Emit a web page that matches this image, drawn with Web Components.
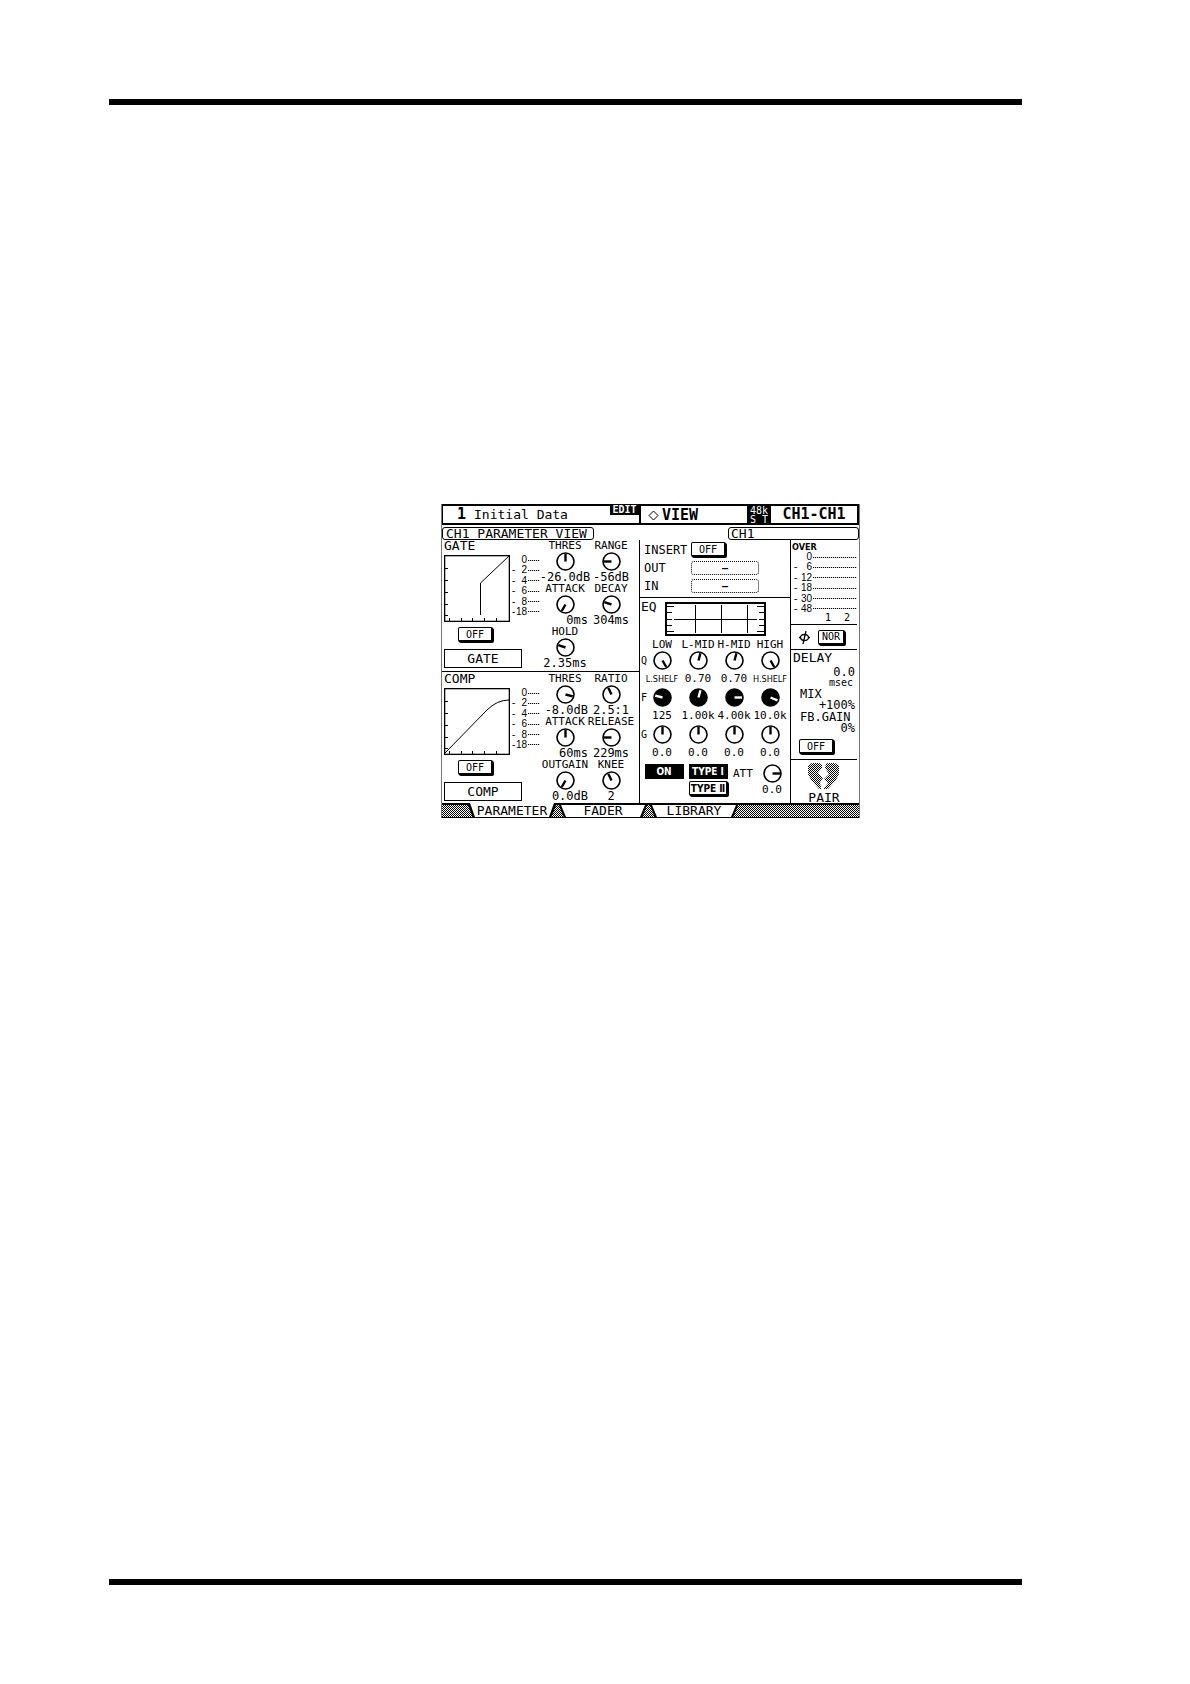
<!DOCTYPE html>
<html lang="en">
<head>
<meta charset="utf-8">
<title>CH1 Parameter View</title>
<style>
  body {
    margin: 0;
    background: #fff;
    color: #000;
    font: 11px/12px "DejaVu Sans Mono", "Liberation Mono", monospace;
  }
</style>
</head>
<body>
<manual-page>
  <lcd-screen></lcd-screen>
</manual-page>

<script>
const checker = 'repeating-conic-gradient(#000 0 25%, #fff 0 50%) 0 0 / 2px 2px';

// Printed page: a heavy rule above and below the content
customElements.define('manual-page', class extends HTMLElement {
  constructor() {
    super();
    this.attachShadow({ mode: 'open' }).innerHTML = `<style>
  :host {
    display: flex;
    flex-direction: column;
    min-height: 100vh;
    box-sizing: border-box;
    padding: 99px 168px 99px 109px;
  }

  hr {
    width: 100%;
    height: 6px;
    margin: 0;
    border: none;
    background: #000;
  }

  main {
    flex: 1;
    padding: 399px 0 0 332px;
  }
</style>
<hr>
<main><slot></slot></main>
<hr>`;
  }
});

// Raised button, "on" inverts it
customElements.define('lcd-button', class extends HTMLElement {
  constructor() {
    super();
    this.attachShadow({ mode: 'open' }).innerHTML = `<style>
  :host {
    display: block;
    width: 35px;
    height: 15px;
    font-size: 10px;
  }

  button {
    display: block;
    width: 100%;
    height: 100%;
    padding: 0;
    border: 1px solid #000;
    border-width: 1px 2px 2px 1px;
    border-radius: 2px;
    background: #fff;
    color: #000;
    font: inherit;
    line-height: 11px;
    white-space: nowrap;
    box-shadow: 1px 1px 0 #000;
  }

  :host([on]) button {
    background: #000;
    color: #fff;
    border-radius: 0;
    box-shadow: none;
  }

  :host([dotted]) button {
    border: 1px dotted #000;
    border-radius: 3px;
    font-weight: bold;
    box-shadow: none;
  }
</style>
<button type="button"><slot></slot></button>`;
  }
});

// Rotary knob: angle is in degrees from twelve o'clock
customElements.define('lcd-knob', class extends HTMLElement {
  constructor() {
    super();
    const angle = this.getAttribute('angle') || 0;
    const label = this.getAttribute('label');
    const name = this.getAttribute('name') || label;
    const filled = this.hasAttribute('filled');

    this.attachShadow({ mode: 'open' }).innerHTML = `<style>
  :host {
    display: flex;
    flex-direction: column;
    align-items: center;
    white-space: nowrap;
    min-width: 0;
  }

  label, output {
    display: flex;
    justify-content: center;
    width: 100%;
    height: 12px;
  }

  output {
    margin-top: var(--value-gap, 0);
    font-size: var(--value-size, 12px);
  }

  :host([narrow]) output {
    font: 9px/12px "Liberation Sans Narrow", "DejaVu Sans Condensed", sans-serif;
  }

  :host([end]) output {
    justify-content: flex-end;
  }

  .dial {
    position: relative;
    height: 19px;
  }

  svg {
    display: block;
  }

  input {
    position: absolute;
    inset: 0;
    width: 19px;
    height: 19px;
    margin: 0;
    opacity: 0;
  }
</style>
${label ? `<label for="range">${label}</label>` : ''}
<div class="dial">
  <svg width="19" height="19" viewBox="0 0 19 19">
    <circle cx="9.5" cy="9.5" r="8.5" fill="${filled ? '#000' : '#fff'}" stroke="#000" stroke-width="1.6"/>
    <path d="M9.5 9.5V2" transform="rotate(${angle} 9.5 9.5)" stroke="${filled ? '#fff' : '#000'}" stroke-width="2.4"/>
  </svg>
  <input id="range" type="range" min="-150" max="150" value="${angle}" aria-label="${name}">
</div>
<output for="range"><slot></slot></output>`;
  }
});

// Meter scale, one row per level with a dotted line to the right
customElements.define('lcd-scale', class extends HTMLElement {
  constructor() {
    super();
    const rows = this.getAttribute('levels').split(',').map((level) => `
<li><span class="level"><i>${level === '0' ? '' : '-'}</i><b>${level}</b></span><span class="dots"></span></li>`);

    this.attachShadow({ mode: 'open' }).innerHTML = `<style>
  :host {
    display: block;
    font: 10px/10px "Liberation Sans", sans-serif;
  }

  ul {
    display: flex;
    flex-direction: column;
    justify-content: space-between;
    height: 62px;
    margin: 0;
    padding: 0;
    list-style: none;
  }

  li {
    display: flex;
    align-items: center;
    gap: 1px;
    height: 10px;
  }

  .level {
    display: flex;
    justify-content: space-between;
    width: var(--level-width, 15px);
  }

  i, b {
    font-style: normal;
    font-weight: normal;
  }

  .dots {
    flex: 1;
    height: 1px;
    background: repeating-linear-gradient(90deg, #000 0 1px, #ccc 1px 2px);
  }
</style>
<ul>${rows.join('')}</ul>`;
  }
});

// Gate / comp block: graph on the left, knobs on the right
customElements.define('dynamics-panel', class extends HTMLElement {
  constructor() {
    super();
    const name = this.getAttribute('name');
    this.attachShadow({ mode: 'open' }).innerHTML = `<style>
  :host {
    display: grid;
    grid-template-columns: 96px 92px;
    gap: 2px;
    padding-left: 2px;
  }

  h2 {
    margin: 0 0 3px;
    font-size: 13px;
    font-weight: normal;
    line-height: 12px;
  }

  .curve {
    display: grid;
    grid-template-columns: 66px 1fr;
    gap: 2px;
    margin-bottom: 5px;
  }

  svg {
    display: block;
  }

  lcd-button {
    margin: 0 0 7px 14px;
  }

  .library {
    width: 78px;
    height: 19px;
    box-sizing: border-box;
    border: 1px solid #000;
    font-size: 13px;
    line-height: 17px;
    text-align: center;
  }

  .knobs {
    display: grid;
    grid-template-columns: 46px 46px;
    align-content: start;
  }
</style>
<div>
  <h2>${name}</h2>
  <div class="curve">
    <svg width="66" height="67" viewBox="0 0 66 67" fill="none" stroke="#000">
      <rect x=".5" y=".5" width="65" height="66" stroke-width="1.6"/>
      <path d="M0 13.5h4M0 25.5h4M0 37.5h4M0 49.5h4M0 60.5h4M5.5 67v-4M17.5 67v-4M28.5 67v-4M40.5 67v-4M52.5 67v-4"/>
      <path d="${this.getAttribute('curve')}"/>
    </svg>
    <lcd-scale levels="0,2,4,6,8,18"></lcd-scale>
  </div>
  <lcd-button>OFF</lcd-button>
  <div class="library">${name}</div>
</div>
<div class="knobs"><slot></slot></div>`;
  }
});

customElements.define('insert-panel', class extends HTMLElement {
  constructor() {
    super();
    this.attachShadow({ mode: 'open' }).innerHTML = `<style>
  :host {
    display: grid;
    grid-template-columns: 47px 68px;
    grid-template-rows: 15px 14px 14px;
    gap: 4px 0;
    align-items: center;
    padding: 2px 0 0 4px;
    font-size: 12px;
  }

  lcd-button[dotted] {
    width: 68px;
    height: 14px;
  }
</style>
<span>INSERT</span><lcd-button>OFF</lcd-button>
<span>OUT</span><lcd-button dotted>–</lcd-button>
<span>IN</span><lcd-button dotted>–</lcd-button>`;
  }
});

customElements.define('eq-panel', class extends HTMLElement {
  constructor() {
    super();
    this.attachShadow({ mode: 'open' }).innerHTML = `<style>
  :host {
    display: block;
    padding: 4px 0 0 1px;
    --value-size: 11px;
  }

  header {
    display: flex;
    gap: 8px;
    height: 37px;
  }

  h2 {
    width: 16px;
    margin: 0;
    font-size: 13px;
    font-weight: normal;
    line-height: 9px;
  }

  .bands {
    display: grid;
    grid-template-columns: 3px repeat(4, 36px);
    row-gap: 3px;
    --value-gap: 3px;
  }

  .bands > span {
    align-self: start;
    padding-top: 4px;
    font-size: 10px;
  }

  .bands > .first {
    padding-top: 16px;
  }

  footer {
    display: grid;
    grid-template-columns: 39px 39px 24px 1fr;
    gap: 5px;
    align-items: start;
    padding: 5px 0 0 4px;
    --value-gap: 1px;
  }

  lcd-button {
    width: 39px;
    font: bold 10px/11px "Liberation Sans Narrow", "DejaVu Sans Condensed", sans-serif;
  }

  .types {
    display: grid;
    gap: 2px;
  }

  .att {
    padding-top: 4px;
  }

  footer lcd-knob {
    width: 36px;
    margin-left: -8px;
  }
</style>
<header>
  <h2>EQ</h2>
  <svg width="101" height="35" viewBox="0 0 101 35" fill="none" stroke="#000">
    <rect x="1" y="1" width="99" height="32" stroke-width="2"/>
    <path d="M30.5 3v28M56.5 3v28M82.5 3v28M9 17.5h83"/>
    <path d="M2 4.5h7M2 10.5h5M2 17.5h5M2 23.5h5M2 29.5h7M92 4.5h7M94 10.5h5M94 17.5h5M94 23.5h5M92 29.5h7"/>
  </svg>
</header>
<div class="bands">
  <span class="first">Q</span>
  <lcd-knob label="LOW" angle="150" narrow>L.SHELF</lcd-knob>
  <lcd-knob label="L-MID" angle="15">0.70</lcd-knob>
  <lcd-knob label="H-MID" angle="15">0.70</lcd-knob>
  <lcd-knob label="HIGH" angle="150" narrow>H.SHELF</lcd-knob>
  <span>F</span>
  <lcd-knob name="Low frequency" angle="-75" filled>125</lcd-knob>
  <lcd-knob name="Low mid frequency" angle="15" filled>1.00k</lcd-knob>
  <lcd-knob name="High mid frequency" angle="90" filled>4.00k</lcd-knob>
  <lcd-knob name="High frequency" angle="112" filled>10.0k</lcd-knob>
  <span>G</span>
  <lcd-knob name="Low gain">0.0</lcd-knob>
  <lcd-knob name="Low mid gain">0.0</lcd-knob>
  <lcd-knob name="High mid gain">0.0</lcd-knob>
  <lcd-knob name="High gain">0.0</lcd-knob>
</div>
<footer>
  <lcd-button on>ON</lcd-button>
  <div class="types">
    <lcd-button on>TYPE Ⅰ</lcd-button>
    <lcd-button>TYPE Ⅱ</lcd-button>
  </div>
  <span class="att">ATT</span>
  <lcd-knob name="Attenuation" angle="90">0.0</lcd-knob>
</footer>`;
  }
});

// Right hand strip: meter, phase, delay and pair
customElements.define('channel-strip', class extends HTMLElement {
  constructor() {
    super();
    this.attachShadow({ mode: 'open' }).innerHTML = `<style>
  :host {
    display: grid;
    grid-template-rows: 84px 25px 110px 1fr;
    padding-right: 2px;
    font-size: 12px;
    line-height: 11px;
  }

  section + section {
    border-top: 1px solid #000;
  }

  .over {
    display: block;
    padding: 3px 0 0 1px;
    font: bold 9px/9px "Liberation Sans Narrow", "DejaVu Sans Condensed", sans-serif;
  }

  lcd-scale {
    --level-width: 18px;
    padding-left: 3px;
  }

  .channels {
    display: flex;
    justify-content: flex-end;
    gap: 13px;
    padding-right: 7px;
    font-size: 10px;
    line-height: 8px;
  }

  .phase {
    display: flex;
    align-items: center;
    gap: 8px;
    padding-left: 8px;
  }

  .phase lcd-button {
    width: 27px;
  }

  .delay {
    display: grid;
    align-content: start;
    padding: 2px 2px 0 2px;
  }

  .delay span {
    margin-top: 1px;
    padding-left: 7px;
  }

  .delay output {
    text-align: right;
  }

  .delay .title {
    margin: 0;
    padding: 0 0 4px;
    font-size: 13px;
  }

  .delay .unit {
    padding-right: 2px;
    font-size: 10px;
    line-height: 10px;
  }

  .delay lcd-button {
    margin: 5px 0 0 6px;
  }

  .pair {
    display: grid;
    justify-items: center;
    align-content: start;
    gap: 2px;
    padding-top: 2px;
    font-size: 13px;
  }
</style>
<section>
  <span class="over">OVER</span>
  <lcd-scale levels="0,6,12,18,30,48"></lcd-scale>
  <div class="channels"><span>1</span><span>2</span></div>
</section>
<section class="phase">
  <svg width="11" height="13" viewBox="0 0 11 13" fill="none" stroke="#000" stroke-width="1.3">
    <ellipse cx="5.5" cy="6.5" rx="4" ry="3"/>
    <path d="M7 0L4 13M0 6.5h1.5M9.5 6.5H11"/>
  </svg>
  <lcd-button>NOR</lcd-button>
</section>
<section class="delay">
  <span class="title">DELAY</span>
  <output>0.0</output>
  <output class="unit">msec</output>
  <span>MIX</span>
  <output>+100%</output>
  <span>FB.GAIN</span>
  <output>0%</output>
  <lcd-button>OFF</lcd-button>
</section>
<section class="pair">
  <svg width="32" height="28" viewBox="0 0 32 28">
    <defs>
      <pattern id="dither" width="2" height="2" patternUnits="userSpaceOnUse">
        <path d="M0 0h1v1H0zM1 1h1v1H1z" shape-rendering="crispEdges"/>
      </pattern>
    </defs>
    <path fill="url(#dither)" d="M4 1h7l3 2v3l-4 5 5 5-3 5 1 4v2h-2l-8-9-3-6V4z"/>
    <path fill="url(#dither)" d="M18 2l2-1h7l4 3v8l-3 6-8 9h-4v-1l4-5-4-4 5-5-4-6z"/>
  </svg>
  <span>PAIR</span>
</section>`;
  }
});

customElements.define('lcd-tab', class extends HTMLElement {
  constructor() {
    super();
    this.attachShadow({ mode: 'open' }).innerHTML = `<style>
  :host {
    display: block;
    width: 90px;
  }

  button {
    display: block;
    width: 100%;
    height: 15px;
    padding: 2px 3px 1px;
    border: none;
    background: #000;
    font: 13px/12px "DejaVu Sans Mono", monospace;
    clip-path: polygon(0 0, 100% 0, calc(100% - 6px) 100%, 6px 100%);
  }

  :host([active]) button {
    padding-top: 0;
  }

  span {
    display: block;
    height: 12px;
    background: #fff;
    clip-path: polygon(0 0, 100% 0, calc(100% - 5px) 100%, 5px 100%);
  }

  :host([active]) span {
    height: 14px;
    line-height: 16px;
  }
</style>
<button type="button"><span><slot></slot></span></button>`;
  }
});

customElements.define('lcd-screen', class extends HTMLElement {
  constructor() {
    super();
    this.attachShadow({ mode: 'open' }).innerHTML = `<style>
  :host {
    display: block;
    width: 100%;
    max-width: 419px;
    box-sizing: border-box;
    border: 1px solid #777;
    border-width: 0 1px;
  }

  header {
    display: grid;
    grid-template-columns: 167px 29px 108px 24px 1fr;
    height: 21px;
    box-sizing: border-box;
    border: 1px solid #000;
    border-width: 2px 2px 2px 1px;
    font-size: 13px;
    line-height: 17px;
  }

  header b {
    font-size: 15px;
  }

  .scene {
    display: flex;
    gap: 8px;
    padding-left: 14px;
  }

  .edit {
    height: 9px;
    background: #000;
    color: #fff;
    font: bold 10px/8px "DejaVu Sans Mono", monospace;
    text-align: center;
  }

  .page {
    display: flex;
    align-items: center;
    gap: 3px;
    padding-left: 7px;
    border-left: 2px solid #000;
  }

  .clock {
    background: #000;
    color: #fff;
    font-size: 10px;
    line-height: 9px;
    text-align: center;
    white-space: pre;
  }

  .channel {
    text-align: center;
  }

  .names {
    display: flex;
    justify-content: space-between;
    margin-top: 2px;
    font-size: 13px;
    line-height: 11px;
  }

  .names span {
    padding: 0 3px;
    border: 1px solid #000;
    border-radius: 3px;
  }

  .names .long {
    width: 144px;
    white-space: nowrap;
  }

  .names .short {
    width: 125px;
    padding: 0 2px;
  }

  .body {
    display: grid;
    grid-template-columns: 197px 151px 1fr;
    height: 263px;
  }

  .dynamics {
    display: grid;
    grid-template-rows: 133px 130px;
  }

  .dynamics > :first-child {
    border-bottom: 1px solid #000;
    margin-bottom: 1px;
  }

  .middle, channel-strip {
    border-left: 1px solid #000;
  }

  .middle {
    display: grid;
    grid-template-rows: 57px 1fr;
  }

  .middle eq-panel {
    border-top: 1px solid #000;
    margin-right: 2px;
  }

  nav {
    display: flex;
    gap: 1px;
    height: 15px;
    padding-left: 25px;
    background: linear-gradient(#000 0 0) 0 0 / 100% 2px no-repeat, linear-gradient(#000 0 0) 0 100% / 100% 1px no-repeat, ${checker};
  }
</style>
<header>
  <div class="scene"><b>1</b><span>Initial Data</span></div>
  <div class="edit">EDIT</div>
  <div class="page">
    <svg width="11" height="11" viewBox="0 0 11 11"><path d="M5.5 1L10 5.5 5.5 10 1 5.5z" fill="none" stroke="#000"/></svg>
    <b>VIEW</b>
  </div>
  <div class="clock">48k
S T</div>
  <b class="channel">CH1-CH1</b>
</header>
<div class="names"><span class="long">CH1 PARAMETER VIEW</span><span class="short">CH1</span></div>
<div class="body">
  <div class="dynamics">
    <dynamics-panel name="GATE" curve="M36.5 60V28L65 1">
      <lcd-knob label="THRES">-26.0dB</lcd-knob>
      <lcd-knob label="RANGE" angle="-90">-56dB</lcd-knob>
      <lcd-knob label="ATTACK" angle="-150" end>0ms</lcd-knob>
      <lcd-knob label="DECAY" angle="-72">304ms</lcd-knob>
      <lcd-knob label="HOLD" angle="-72">2.35ms</lcd-knob>
    </dynamics-panel>
    <dynamics-panel name="COMP" curve="M1 65L43 22Q53 12 65 12">
      <lcd-knob label="THRES" angle="105" end>-8.0dB</lcd-knob>
      <lcd-knob label="RATIO" angle="-25">2.5:1</lcd-knob>
      <lcd-knob label="ATTACK" end>60ms</lcd-knob>
      <lcd-knob label="RELEASE" angle="-90">229ms</lcd-knob>
      <lcd-knob label="OUTGAIN" angle="-150" end>0.0dB</lcd-knob>
      <lcd-knob label="KNEE" angle="-25">2</lcd-knob>
    </dynamics-panel>
  </div>
  <div class="middle">
    <insert-panel></insert-panel>
    <eq-panel></eq-panel>
  </div>
  <channel-strip></channel-strip>
</div>
<nav>
  <lcd-tab active>PARAMETER</lcd-tab>
  <lcd-tab>FADER</lcd-tab>
  <lcd-tab>LIBRARY</lcd-tab>
</nav>`;
  }
});
</script>
</body>
</html>
